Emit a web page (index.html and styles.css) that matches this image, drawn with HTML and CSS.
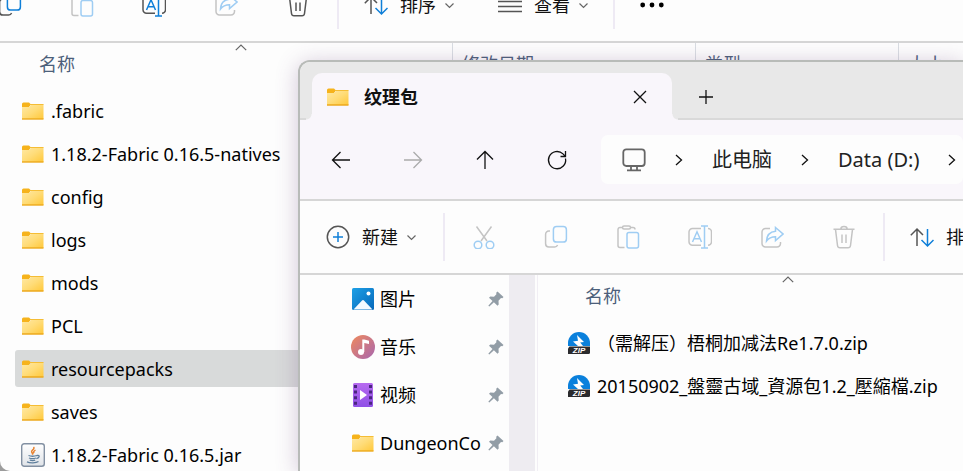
FILE: index.html
```html
<!DOCTYPE html>
<html lang="zh-CN">
<head>
<meta charset="utf-8">
<title>纹理包</title>
<link rel="stylesheet" href="styles.css">
</head>
<body>
<svg class="defs" aria-hidden="true">
  <defs>
    <linearGradient id="g-folder" x1="0" y1="0" x2="1" y2="1"><stop offset="0" stop-color="#ffe9a6"/><stop offset=".5" stop-color="#ffdc78"/><stop offset="1" stop-color="#ffc83a"/></linearGradient>
    <linearGradient id="g-pic" x1="0" y1="0" x2="1" y2="1"><stop offset="0" stop-color="#1ea0e6"/><stop offset="1" stop-color="#0668ba"/></linearGradient>
    <linearGradient id="g-music" x1="0" y1="0" x2="1" y2="1"><stop offset="0" stop-color="#f08a5c"/><stop offset="1" stop-color="#a766b0"/></linearGradient>
    <linearGradient id="g-video" x1="0" y1="0" x2="0" y2="1"><stop offset="0" stop-color="#b76bf0"/><stop offset="1" stop-color="#8f50e6"/></linearGradient>
    <linearGradient id="g-jar" x1="0" y1="0" x2="0" y2="1"><stop offset="0" stop-color="#ffffff"/><stop offset="1" stop-color="#dfe3e8"/></linearGradient>
    <symbol id="i-folder" viewBox="0 0 24 24">
      <path d="M1 5a1.5 1.5 0 0 1 1.500-1.500h5.500l2 2-2 2.500H1z" fill="#f6b31c"/>
      <path d="M1 8h7l2.500-2.500H22.500V20H1z" fill="url(#g-folder)"/>
      <path d="M9 5.500h13.500" stroke="#f5bd35"/>
      <path d="M1 20h21.500" stroke="#eda91c" stroke-width="1.400"/>
    </symbol>
    <symbol id="i-jar" viewBox="0 0 24 24">
      <rect x=".7" y=".7" width="22.600" height="22.600" rx="2.500" fill="url(#g-jar)" stroke="#8290a2" stroke-width="1.400"/>
      <path d="M12.500 4c2 2-3 3.200-1.800 5.200.5.900 1.300 1.300.8 2.600M14.500 7.200c-2 1-2.200 2-1.500 3" fill="none" stroke="#e8812d" stroke-width="1.500"/>
      <path d="M7.500 12.500c2 .8 6 .8 8.500 0M8 15c2 .8 5 .8 7 0M8.800 17.200c2 .6 3.800.6 5.400 0M16 12.500c3-.8 3 2-.6 3.200M6 18.800c3 1.400 9 1.300 11.500-.3" fill="none" stroke="#5f7f9c" stroke-width="1.300"/>
    </symbol>
    <symbol id="i-pic" viewBox="0 0 24 24">
      <rect x="1" y="1" width="22" height="22" rx="1.500" fill="url(#g-pic)"/>
      <path d="M2.500 22.500l8.300-8.800q1.200-1.200 2.400 0l8.300 8.800z" fill="#f4faff"/>
      <circle cx="17.500" cy="6.500" r="2" fill="#fff"/>
    </symbol>
    <symbol id="i-music" viewBox="0 0 24 24">
      <circle cx="12" cy="12" r="12" fill="url(#g-music)"/>
      <circle cx="10" cy="17" r="3" fill="#fff"/>
      <path d="M11.300 4.500h2l4.700 1.200v3.300l-4.700-1v9h-2z" fill="#fff"/>
    </symbol>
    <symbol id="i-video" viewBox="0 0 24 24">
      <rect x="2" y="0" width="20" height="24" rx="1.500" fill="url(#g-video)"/>
      <path d="M9 7l7 5-7 5z" fill="#fff"/>
      <path d="M4.500 2v20M19.500 2v20" stroke="#4a2680" stroke-width="3" stroke-dasharray="3 2.600"/>
    </symbol>
    <symbol id="i-zip" viewBox="0 0 24 24">
      <path d="M1 15V12a11 11 0 0 1 22 0v3z" fill="#0a80dc"/>
      <path d="M10 4l7 7-3.800.6L16 15h-5L6 10.500l5-.8z" fill="#fff"/>
      <path d="M2.500 15.500h20.500v6a1.500 1.500 0 0 1-1.500 1.500H1v-5.500z" fill="#2b2b2e"/>
      <text x="12" y="22" text-anchor="middle" class="zip-label">ZIP</text>
    </symbol>
    <symbol id="i-pin" viewBox="0 0 16 16">
      <path d="M9.500.5l6 5.500-1.200 1.300-1.300-.2-2.500 2.700.2 3.600-1.200 1.300-3.600-3.400L1.300 15.500.3 14.800l4.200-4.700L1 6.800l1.300-1.200 3.700.2L8.400 3.200l-.2-1.400z" fill="#929da6"/>
    </symbol>
    <symbol id="i-new" viewBox="0 0 24 24">
      <circle cx="12" cy="12" r="10.700" class="k"/><path d="M12 7v10M7 12h10" class="b"/>
    </symbol>
    <symbol id="i-cut" viewBox="0 0 24 24">
      <path d="M4.500 1.500L15 16M19.500 1.500L9 16" class="k"/><circle cx="6" cy="20" r="3.800" class="b"/><circle cx="18" cy="20" r="3.800" class="b"/>
    </symbol>
    <symbol id="i-copy" viewBox="0 0 24 24">
      <path d="M6 6H4.800A3.200 3.200 0 0 0 1.600 9.200v9.600A3.200 3.200 0 0 0 4.800 22h5.800a3.200 3.200 0 0 0 3-2" class="k"/><rect x="9.400" y="1.600" width="13" height="15.500" rx="3.200" class="b"/>
    </symbol>
    <symbol id="i-paste" viewBox="0 0 24 24">
      <path d="M8.500 22.500H4a2 2 0 0 1-2-2V4.500a2 2 0 0 1 2-2h2M15 2.500h2a2 2 0 0 1 2 2" class="k"/><rect x="6.500" y="1" width="8" height="3" rx="1.500" class="k"/><rect x="11" y="7.500" width="11.500" height="15.500" rx="2" class="b"/>
    </symbol>
    <symbol id="i-rename" viewBox="0 0 24 24">
      <path d="M13 20.300H4.500A3.500 3.500 0 0 1 1 16.800V7a3.500 3.500 0 0 1 3.500-3.500H13M20 3.500a3.500 3.500 0 0 1 3.500 3.500v9.800A3.500 3.500 0 0 1 20 20.300" class="k"/><path d="M4.500 17L9 6.800 13.500 17M6 13.700h6M16.500 1v22M13 1h7M13 23h7" class="b"/>
    </symbol>
    <symbol id="i-share" viewBox="0 0 24 24">
      <path d="M10 3.500H5.500A3.500 3.500 0 0 0 2 7v11.500A3.500 3.500 0 0 0 5.500 22H17a3.500 3.500 0 0 0 3.500-3.500V17" class="k"/><path d="M15.500 2.500l7.500 6.500-7.500 6.500v-3.800c-4.500 0-6.800 1.300-9 4.300.3-5.500 3.500-9.300 9-9.800z" class="b"/>
    </symbol>
    <symbol id="i-trash" viewBox="0 0 24 24">
      <path d="M1.500 4.300h21M3.500 4.300l2 16.200a2.500 2.500 0 0 0 2.500 2.200h8a2.500 2.500 0 0 0 2.500-2.200l2-16.200M8.800 4.300a3.200 2.700 0 0 1 6.400 0M10 9.500v8.500M14 9.500v8.500" class="k"/>
    </symbol>
    <symbol id="i-sort" viewBox="0 0 24 24">
      <path d="M7 21V4M.8 10.200L7 4l6 6" class="k"/><path d="M17.500 4v17M11.500 15l6 6 6-6" class="b"/>
    </symbol>
    <symbol id="i-view" viewBox="0 0 24 24">
      <path d="M0 8.500h24M0 13.500h24M0 18.500h24" class="k"/>
    </symbol>
    <symbol id="i-more" viewBox="0 0 24 24">
      <circle cx="2.700" cy="12" r="2.400"/><circle cx="12" cy="12" r="2.400"/><circle cx="21.300" cy="12" r="2.400"/>
    </symbol>
    <symbol id="i-down" viewBox="0 0 9 9"><path d="M.5 2.500l4 4 4-4" class="line"/></symbol>
    <symbol id="i-up" viewBox="0 0 12 7"><path d="M.8 6.200L6 1l5.200 5.200" class="line"/></symbol>
    <symbol id="i-left" viewBox="0 0 24 24"><path d="M21 12H3.500M11.500 4L3.500 12l8 8" class="nav-line"/></symbol>
    <symbol id="i-right" viewBox="0 0 24 24"><path d="M3 12h17.500M12.500 4l8 8-8 8" class="nav-line"/></symbol>
    <symbol id="i-top" viewBox="0 0 24 24"><path d="M12 21V3.500M4 11.500l8-8 8 8" class="nav-line"/></symbol>
    <symbol id="i-refresh" viewBox="0 0 24 24"><path d="M20.500 10.500a8.600 8.600 0 1 1-2.500-4.600l2.300 2.500M20.500 3v5.500h-5" class="nav-line"/></symbol>
    <symbol id="i-chev" viewBox="0 0 12 12"><path d="M3 1l5.500 5L3 11" class="nav-line"/></symbol>
    <symbol id="i-pc" viewBox="0 0 24 24"><rect x="1.300" y="1.300" width="21.400" height="16.700" rx="3" class="pc"/><path d="M9 18v4M15 18v4M5 22.300h14" class="pc"/></symbol>
    <symbol id="i-close" viewBox="0 0 14 14"><path d="M1 1l12 12M13 1L1 13" class="nav-line"/></symbol>
    <symbol id="i-plus" viewBox="0 0 14 14"><path d="M7 0v14M0 7h14" class="nav-line"/></symbol>
  </defs>
</svg>

<main class="window back">
  <div class="toolbar-clip">
    <div class="toolbar">
      <button class="tool" aria-label="复制"><svg><use href="#i-copy"/></svg></button>
      <button class="tool off" aria-label="粘贴"><svg><use href="#i-paste"/></svg></button>
      <button class="tool" aria-label="重命名"><svg><use href="#i-rename"/></svg></button>
      <button class="tool off" aria-label="共享"><svg><use href="#i-share"/></svg></button>
      <button class="tool" aria-label="删除"><svg><use href="#i-trash"/></svg></button>
      <span class="sep"></span>
      <button class="menu"><svg><use href="#i-sort"/></svg>排序<svg class="down"><use href="#i-down"/></svg></button>
      <button class="menu"><svg><use href="#i-view"/></svg>查看<svg class="down"><use href="#i-down"/></svg></button>
      <span class="sep"></span>
      <button class="menu" aria-label="更多"><svg><use href="#i-more"/></svg></button>
    </div>
  </div>
  <section class="pane">
    <div class="columns">
      <button class="column name">名称<svg class="up"><use href="#i-up"/></svg></button>
      <button class="column date">修改日期</button>
      <button class="column type">类型</button>
      <button class="column size">大小</button>
    </div>
    <ul class="files">
      <li><a href="#"><svg><use href="#i-folder"/></svg>.fabric</a></li>
      <li><a href="#"><svg><use href="#i-folder"/></svg>1.18.2-Fabric 0.16.5-natives</a></li>
      <li><a href="#"><svg><use href="#i-folder"/></svg>config</a></li>
      <li><a href="#"><svg><use href="#i-folder"/></svg>logs</a></li>
      <li><a href="#"><svg><use href="#i-folder"/></svg>mods</a></li>
      <li><a href="#"><svg><use href="#i-folder"/></svg>PCL</a></li>
      <li><a href="#" class="selected"><svg><use href="#i-folder"/></svg>resourcepacks</a></li>
      <li><a href="#"><svg><use href="#i-folder"/></svg>saves</a></li>
      <li><a href="#"><svg><use href="#i-jar"/></svg>1.18.2-Fabric 0.16.5.jar</a></li>
    </ul>
  </section>
</main>

<section class="window front">
  <header class="tabs">
    <div class="tab">
      <svg><use href="#i-folder"/></svg>
      <span class="tab-title">纹理包</span>
      <button class="tab-button" aria-label="关闭"><svg><use href="#i-close"/></svg></button>
    </div>
    <button class="tab-button" aria-label="新标签页"><svg><use href="#i-plus"/></svg></button>
  </header>
  <div class="navigation">
    <button class="tool" aria-label="后退"><svg><use href="#i-left"/></svg></button>
    <button class="tool dim" aria-label="前进"><svg><use href="#i-right"/></svg></button>
    <button class="tool" aria-label="上移"><svg><use href="#i-top"/></svg></button>
    <button class="tool" aria-label="刷新"><svg><use href="#i-refresh"/></svg></button>
    <nav class="address">
      <svg class="pc-icon"><use href="#i-pc"/></svg>
      <svg class="chev"><use href="#i-chev"/></svg>
      <a href="#">此电脑</a>
      <svg class="chev"><use href="#i-chev"/></svg>
      <a href="#">Data (D:)</a>
      <svg class="chev"><use href="#i-chev"/></svg>
    </nav>
  </div>
  <div class="toolbar">
    <button class="menu new"><svg><use href="#i-new"/></svg>新建<svg class="down"><use href="#i-down"/></svg></button>
    <span class="sep"></span>
    <button class="tool off" aria-label="剪切"><svg><use href="#i-cut"/></svg></button>
    <button class="tool off" aria-label="复制"><svg><use href="#i-copy"/></svg></button>
    <button class="tool off" aria-label="粘贴"><svg><use href="#i-paste"/></svg></button>
    <button class="tool off" aria-label="重命名"><svg><use href="#i-rename"/></svg></button>
    <button class="tool off" aria-label="共享"><svg><use href="#i-share"/></svg></button>
    <button class="tool off" aria-label="删除"><svg><use href="#i-trash"/></svg></button>
    <span class="sep"></span>
    <button class="menu"><svg><use href="#i-sort"/></svg>排序</button>
  </div>
  <div class="content">
    <ul class="places">
      <li><a href="#"><svg><use href="#i-pic"/></svg><span>图片</span><svg class="pin"><use href="#i-pin"/></svg></a></li>
      <li><a href="#"><svg><use href="#i-music"/></svg><span>音乐</span><svg class="pin"><use href="#i-pin"/></svg></a></li>
      <li><a href="#"><svg><use href="#i-video"/></svg><span>视频</span><svg class="pin"><use href="#i-pin"/></svg></a></li>
      <li><a href="#"><svg><use href="#i-folder"/></svg><span>DungeonCo</span><svg class="pin"><use href="#i-pin"/></svg></a></li>
    </ul>
    <div class="track"></div>
    <section class="pane">
      <div class="columns">
        <button class="column name">名称<svg class="up"><use href="#i-up"/></svg></button>
      </div>
      <ul class="files">
        <li><a href="#"><svg><use href="#i-zip"/></svg>（需解压）梧桐加减法Re1.7.0.zip</a></li>
        <li><a href="#"><svg><use href="#i-zip"/></svg><span lang="zh-TW">20150902_盤靈古域_資源包1.2_壓縮檔.zip</span></a></li>
      </ul>
    </section>
  </div>
</section>
</body>
</html>
```
FILE: styles.css
```css
* { box-sizing: border-box; }

body {
  margin: 0;
  height: 100vh;
  overflow: hidden;
  background: #9c9c9c;
  color: #111;
  font: 18px/24px "Noto Sans", "Noto Sans CJK SC", sans-serif;
}

button {
  margin: 0;
  padding: 0;
  border: 0;
  background: none;
  color: inherit;
  font: inherit;
}

a { color: inherit; text-decoration: none; }
ul { margin: 0; padding: 0; list-style: none; }
svg { display: block; flex: none; width: 24px; height: 24px; }
.defs { position: absolute; width: 0; height: 0; }

.k, .b, .line, .nav-line, .pc { fill: none; stroke-width: 1.5; }
.k { stroke: var(--dark, #555); }
.b { stroke: var(--blue, #0f7fd8); }
.line { stroke: #666; stroke-width: 1.2; }
.nav-line { stroke: currentColor; stroke-width: 1.3; }
.pc { stroke: #666; stroke-width: 1.8; }
.zip-label { fill: #fff; font: italic bold 8px "Liberation Sans", sans-serif; }

.window { background: #fdfdfd; }

.back {
  height: 100%;
  overflow: hidden;
  border-bottom-left-radius: 10px;
}

.front {
  position: absolute;
  inset: 60px 0 0 298px;
  display: flex;
  flex-direction: column;
  overflow: hidden;
  border: 2px solid #b8bbb8;
  border-width: 2px 0 0 2px;
  border-top-left-radius: 12px;
  box-shadow: 0 3px 22px rgba(110, 70, 125, .3);
}

/* Command bar */
.toolbar {
  display: flex;
  flex: none;
  align-items: center;
  height: 74px;
  border-bottom: 2px solid #d6d6d6;
}
.toolbar-clip {
  display: flex;
  align-items: flex-end;
  height: 43px;
  overflow: hidden;
}
.toolbar-clip .toolbar { flex: 1; margin-left: -26px; }

.tool {
  display: grid;
  flex: none;
  place-items: center;
  width: 72px;
  height: 48px;
}
.off { --dark: #c4c4c4; --blue: #9fcdf3; }
.sep { flex: none; width: 2px; height: 48px; margin: 0 3px; background: #eeeaf4; }
.menu {
  display: flex;
  flex: none;
  align-items: center;
  gap: 12px;
  height: 48px;
  padding: 0 22px;
}
.menu.new { padding: 0 24px 0 26px; }
.down { width: 9px; height: 9px; margin-left: -3px; }

/* File list */
.columns { display: flex; height: 41px; padding-left: 30px; color: #4c607a; }
.column { flex: none; padding: 0 9px; border-right: 1px solid #d9dde2; text-align: left; }
.name { position: relative; width: 423px; }
.date { width: 243px; }
.type { width: 203px; }
.size { flex: 1; border: 0; }
.front .name { border: 0; }
.up { position: absolute; top: 1px; left: 50%; width: 12px; height: 7px; margin-left: -6px; }

.files { display: grid; gap: 6px; padding: 8px 0 0 15px; }
.files a {
  display: flex;
  align-items: center;
  gap: 6px;
  height: 37px;
  padding-left: 6px;
  border-radius: 3px;
  color: #000;
  white-space: nowrap;
}
.files .selected { background: #d8dada; }
[lang="zh-TW"] { font-family: "Noto Sans", "Noto Sans CJK TC", sans-serif; }

/* Tabs */
.tabs {
  display: flex;
  flex: none;
  align-items: flex-end;
  height: 58px;
  padding-left: 12px;
  background: #e8e8e8;
  box-shadow: inset 0 -2px #d9d9d9;
}
.tab {
  position: relative;
  display: flex;
  align-items: center;
  width: 360px;
  height: 47px;
  padding: 0 8px 0 14px;
  border-radius: 10px 10px 0 0;
  background: #f9f6fb;
}
.tab::before, .tab::after {
  content: "";
  position: absolute;
  bottom: 0;
  width: 6px;
  height: 6px;
}
.tab::before { right: 100%; background: radial-gradient(circle at 0 0, #e8e8e8 5px, #f9f6fb 6px); }
.tab::after { left: 100%; background: radial-gradient(circle at 100% 0, #e8e8e8 5px, #f9f6fb 6px); }
.tab-title { flex: 1; margin-left: 14px; font-weight: bold; }
.tab-button { display: grid; flex: none; place-items: center; width: 46px; height: 47px; }
.tab > .tab-button { width: 48px; }
.tab-button svg { width: 14px; height: 14px; }
.tabs > .tab-button { margin-left: 11px; }

/* Navigation and address */
.navigation {
  display: flex;
  flex: none;
  align-items: center;
  height: 81px;
  padding-left: 5px;
  border-bottom: 2px solid #d6d6d6;
  background: #f9f6fb;
}
.dim { color: #aaa; }
.address {
  display: flex;
  flex: 1;
  align-items: center;
  min-width: 0;
  height: 49px;
  margin-left: 8px;
  padding-left: 21px;
  overflow: hidden;
  border-radius: 7px;
  background: #fdfdfd;
  font-size: 20px;
  white-space: nowrap;
}
.address a { flex: none; color: #222; }
.pc-icon { width: 24px; height: 24px; }
.chev { width: 12px; height: 12px; margin: 0 27px; }

/* Body of the front window */
.content { display: flex; flex: 1; min-height: 0; }
.places { flex: none; width: 209px; padding-left: 51px; }
.places a { display: flex; align-items: center; gap: 5px; height: 48px; padding-right: 5px; }
.places span { flex: 1; min-width: 0; overflow: hidden; color: #000; white-space: nowrap; }
.pin { width: 16px; height: 16px; }
.track { flex: none; width: 26px; background: #eeecf1; }
.content .pane { flex: 1; min-width: 0; margin-left: 2px; padding-left: 8px; border-left: 1px solid #f1eef4; }
```
